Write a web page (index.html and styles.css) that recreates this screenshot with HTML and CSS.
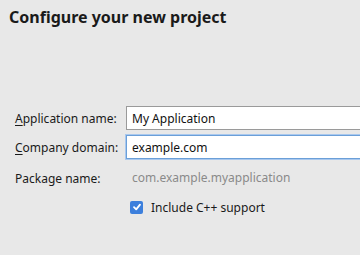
FILE: index.html
```html
<!DOCTYPE html>
<html>
<head>
    <link rel="stylesheet" href="styles.css">
</head>
<body>
    <div class="page">
        <h1 class="title">Configure your new project</h1>

        <div class="form">
            <label class="label" for="app-name"><u>A</u>pplication name:</label>
            <input class="field" id="app-name" type="text" value="My Application">

            <label class="label" for="domain"><u>C</u>ompany domain:</label>
            <input class="field focused" id="domain" type="text" value="example.com">

            <span class="label">Package name:</span>
            <span class="package">com.example.myapplication</span>

            <span></span>
            <label class="check">
                <span class="box">
                    <svg width="10" height="10" viewBox="0 0 10 10"><path d="M2 5.2 L4.2 7.4 L8 2.6" fill="none" stroke="#fff" stroke-width="1.8" stroke-linecap="round" stroke-linejoin="round"/></svg>
                </span>
                Include C++ support
            </label>
        </div>
    </div>
</body>
</html>
```

FILE: styles.css
```css
body {
    margin: 0;
    background: #e8e8e8;
    font-family: "Noto Sans", sans-serif;
    color: #1a1a1a;
}

.page {
    padding: 6px 9px;
}

.title {
    margin: 0;
    font-size: 16px;
    font-weight: bold;
    line-height: 22px;
}

.form {
    display: grid;
    grid-template-columns: 111px 1fr;
    row-gap: 5px;
    margin-top: 78px;
    margin-left: 6px;
    margin-right: -20px;
    align-items: center;
}

.label {
    font-size: 12px;
    white-space: nowrap;
}

.label u {
    text-decoration-thickness: 1px;
    text-underline-offset: 2px;
}

.field {
    box-sizing: border-box;
    height: 24px;
    border: 1px solid #9a9a9a;
    background: #fff;
    padding: 0 5px;
    font: 12px "Noto Sans", sans-serif;
    color: #111;
    outline: none;
}

.field.focused {
    border-color: #6b9fd8;
    box-shadow: 0 0 0 1px #a9c8ee;
}

.package {
    font-size: 12px;
    color: #8a8a8a;
    line-height: 28px;
    padding-left: 6px;
}

.check {
    display: flex;
    align-items: center;
    gap: 8px;
    min-height: 20px;
    font-size: 12px;
    padding-left: 4px;
}

.box {
    width: 13px;
    height: 13px;
    border-radius: 2px;
    background: #3c7fdc;
    display: flex;
    align-items: center;
    justify-content: center;
}
```
